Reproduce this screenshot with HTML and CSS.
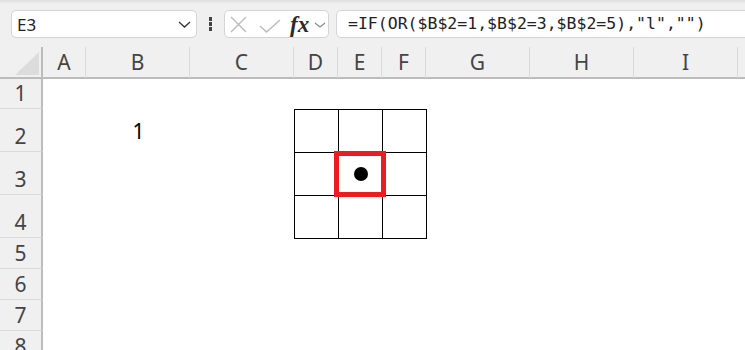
FILE: index.html
```html
<!DOCTYPE html>
<html lang="en">
<head>
<meta charset="UTF-8">
<meta name="viewport" content="width=device-width, initial-scale=1.0">
<title>Sheet</title>
<link rel="stylesheet" href="styles.css">
</head>
<body>
    <div id="toolbar">
        <div class="namebox">
            <span>E3</span>
            <svg width="13" height="7" viewBox="0 0 13 7"><polyline points="1,1 6.5,6 12,1" fill="none" stroke="#333" stroke-width="1.3"/></svg>
        </div>
        <div class="dots"><i></i><i></i><i></i></div>
        <div class="fxbox">
            <svg class="icon-x" width="17" height="17" viewBox="0 0 17 17"><path d="M1 1 L16 16 M16 1 L1 16" stroke="#b9b9b9" stroke-width="1.3"/></svg>
            <svg class="icon-ok" width="22" height="14" viewBox="0 0 22 14"><polyline points="1,7 7.5,13 21,1" fill="none" stroke="#b9b9b9" stroke-width="1.3"/></svg>
            <span class="fx">fx</span>
            <svg class="icon-dd" width="12" height="6" viewBox="0 0 12 6"><polyline points="1,1 6,5 11,1" fill="none" stroke="#8a8a8a" stroke-width="1.1"/></svg>
        </div>
        <div class="formula">=IF(OR($B$2=1,$B$2=3,$B$2=5),"l","")</div>
    </div>

    <div id="sheet">
        <div class="corner"><svg width="43" height="32"><polygon points="39,5 39,28 15,28" fill="#dcdcdc"/></svg></div>
        <div class="colhead">A</div>
        <div class="colhead">B</div>
        <div class="colhead">C</div>
        <div class="colhead">D</div>
        <div class="colhead">E</div>
        <div class="colhead">F</div>
        <div class="colhead">G</div>
        <div class="colhead">H</div>
        <div class="colhead">I</div>
        <div class="colhead last"></div>

        <div class="rowhead r1">1</div>
        <div class="rowhead r2">2</div>
        <div class="rowhead r3">3</div>
        <div class="rowhead r4">4</div>
        <div class="rowhead r5">5</div>
        <div class="rowhead r6">6</div>
        <div class="rowhead r7">7</div>
        <div class="rowhead r8">8</div>

        <div class="value">1</div>

        <div class="board">
            <div class="sq"></div>
            <div class="sq"></div>
            <div class="sq"></div>
            <div class="sq"></div>
            <div class="sq active"><span class="dot"></span><span class="mark"></span></div>
            <div class="sq"></div>
            <div class="sq"></div>
            <div class="sq"></div>
            <div class="sq"></div>
        </div>
    </div>
</body>
</html>
```

FILE: styles.css
```css
body {
    margin: 0;
    background-color: #f0f0f0;
    font-family: "Noto Sans", "Open Sans", sans-serif;
    overflow: hidden;
    width: 745px;
    height: 350px;
}

#toolbar {
    height: 47px;
    box-sizing: border-box;
    padding: 10px 0 0 11px;
    display: flex;
    align-items: flex-start;
    background: linear-gradient(#dedede 0px, #ececec 3px, #f0f0f0 5px);
}

.namebox {
    width: 186px;
    height: 28px;
    box-sizing: border-box;
    background-color: #fff;
    border: 1px solid #d4d4d4;
    border-radius: 5px;
    display: flex;
    align-items: center;
    justify-content: space-between;
    padding: 0 5px 0 5px;
    font-size: 17px;
    color: #222;
}

.namebox svg {
    margin-top: 1px;
}

.dots {
    margin-left: 11px;
    width: 5px;
    height: 28px;
    display: flex;
    flex-direction: column;
    align-items: center;
    justify-content: center;
    gap: 1.5px;
}

.dots i {
    width: 3.5px;
    height: 3.5px;
    background-color: #444;
}

.fxbox {
    margin-left: 11px;
    width: 105px;
    height: 28px;
    box-sizing: border-box;
    background-color: #fff;
    border: 1px solid #d4d4d4;
    border-radius: 5px;
    display: flex;
    align-items: center;
    padding-left: 5px;
}

.icon-x {
    margin-top: 1px;
}

.icon-ok {
    margin-left: 12px;
    margin-top: 3px;
}

.fx {
    margin-left: 9px;
    font-family: "Liberation Serif", serif;
    font-style: italic;
    font-weight: bold;
    font-size: 23px;
    color: #2a2a2a;
    line-height: 1;
}

.icon-dd {
    margin-left: 5px;
    margin-top: 1px;
}

.formula {
    margin-left: 7px;
    margin-right: -10px;
    flex: 1;
    height: 28px;
    box-sizing: border-box;
    background-color: #fff;
    border: 1px solid #d4d4d4;
    border-radius: 5px;
    padding-left: 11px;
    font-family: "DejaVu Sans Mono", monospace;
    font-size: 16.5px;
    line-height: 26px;
    color: #222;
    white-space: nowrap;
}

#sheet {
    display: grid;
    grid-template-columns: 43px 43px 104px 104px 44px 44px 44px 104px 104px 104px 1fr;
    grid-template-rows: 32px 30px 43px 43px 43px 31px 31px 31px 31px;
    background-color: #fff;
    height: 303px;
}

.corner {
    grid-column: 1;
    grid-row: 1;
    background-color: #f0f0f0;
    border-right: 2px solid #bcbcbc;
    border-bottom: 2px solid #bcbcbc;
    box-sizing: border-box;
}

.corner svg {
    display: block;
}

.colhead {
    grid-row: 1;
    background-color: #f0f0f0;
    border-bottom: 2px solid #bcbcbc;
    border-right: 1px solid #d9d9d9;
    box-sizing: border-box;
    display: flex;
    align-items: center;
    justify-content: center;
    font-size: 21px;
    color: #444;
    padding-bottom: 1px;
}

.colhead.last {
    border-right: none;
}

.rowhead {
    grid-column: 1;
    background-color: #f0f0f0;
    border-right: 2px solid #bcbcbc;
    border-bottom: 1px solid #dadada;
    box-sizing: border-box;
    display: flex;
    align-items: flex-end;
    justify-content: center;
    font-size: 21px;
    line-height: 22px;
    color: #444;
    padding-bottom: 4px;
}

.r1 { grid-row: 2; }
.r2 { grid-row: 3; }
.r3 { grid-row: 4; }
.r4 { grid-row: 5; }
.r5 { grid-row: 6; }
.r6 { grid-row: 7; }
.r7 { grid-row: 8; }
.r8 { grid-row: 9; }

.value {
    grid-column: 3;
    grid-row: 3;
    display: flex;
    align-items: center;
    justify-content: center;
    font-size: 21px;
    color: #000;
    padding-left: 1px;
}

.board {
    grid-column: 5 / 8;
    grid-row: 3 / 6;
    width: 133px;
    height: 130px;
    box-sizing: border-box;
    padding: 1px;
    background-color: #000;
    display: grid;
    grid-template-columns: 43px 43px 43px;
    grid-template-rows: 42px 42px 42px;
    gap: 1px;
    z-index: 1;
}

.sq {
    background-color: #fff;
}

.sq.active {
    position: relative;
    display: flex;
    align-items: center;
    justify-content: center;
}

.dot {
    width: 14px;
    height: 14px;
    border-radius: 50%;
    background-color: #000;
    margin-left: 1px;
}

.mark {
    position: absolute;
    left: -5px;
    top: -2px;
    width: 52px;
    height: 46px;
    box-sizing: border-box;
    border: 5px solid #ec1c24;
}
```
